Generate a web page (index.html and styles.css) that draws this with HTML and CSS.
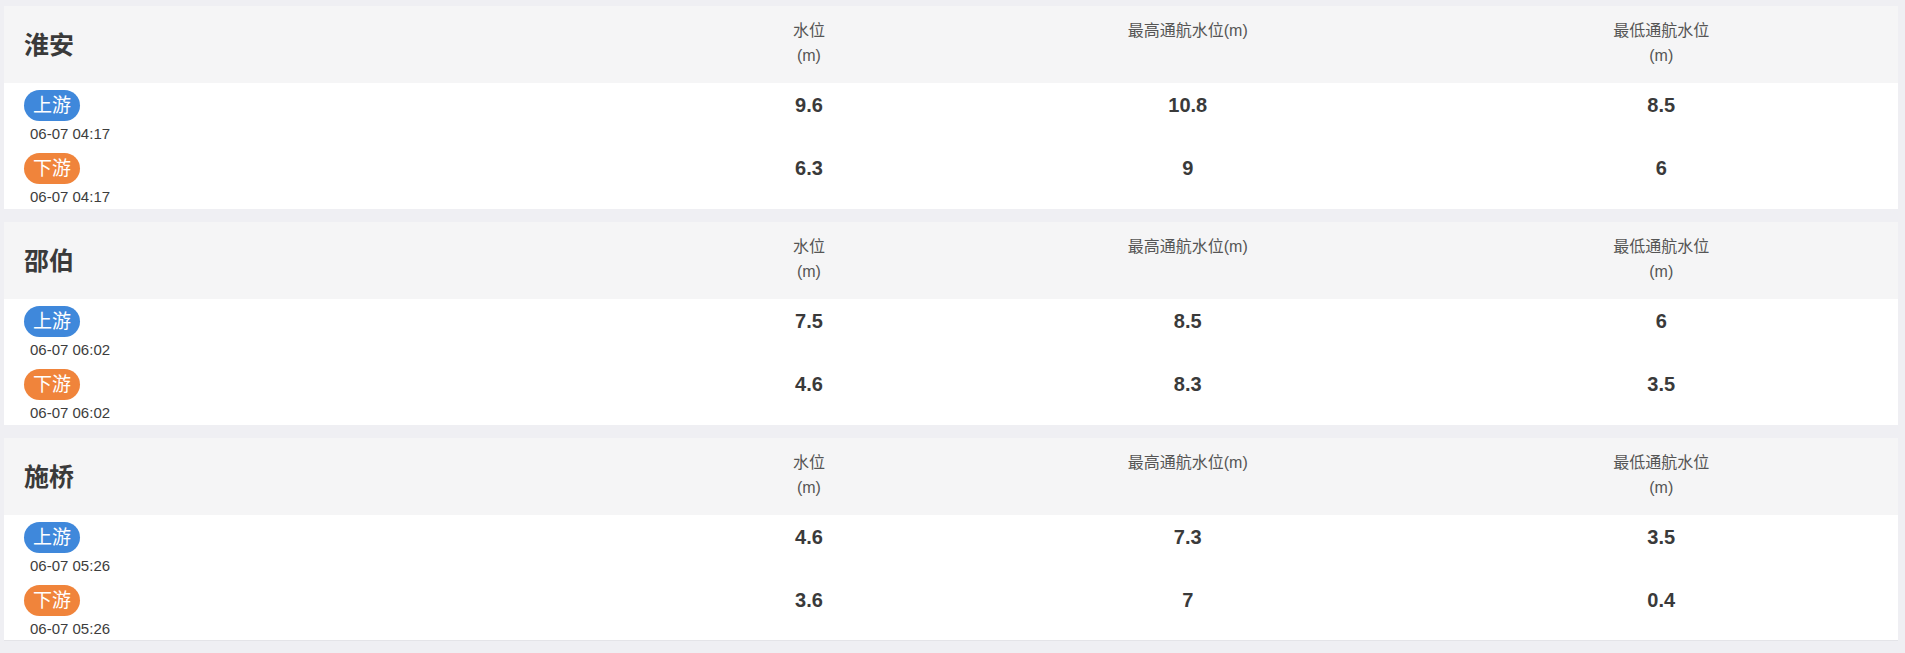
FILE: index.html
```html
<!DOCTYPE html>
<html lang="zh-CN">
<head>
<meta charset="utf-8">
<title>水位</title>
<link rel="stylesheet" href="styles.css">
</head>
<body>
<div class="page">
  <section class="card">
    <div class="card-head">
      <div class="station">淮安</div>
      <div class="col-title">水位<br>(m)</div>
      <div class="col-title">最高通航水位(m)</div>
      <div class="col-title">最低通航水位<br>(m)</div>
    </div>
    <div class="row">
      <div class="loc"><span class="badge up">上游</span><div class="time">06-07 04:17</div></div>
      <div class="val">9.6</div><div class="val">10.8</div><div class="val">8.5</div>
    </div>
    <div class="row">
      <div class="loc"><span class="badge down">下游</span><div class="time">06-07 04:17</div></div>
      <div class="val">6.3</div><div class="val">9</div><div class="val">6</div>
    </div>
  </section>
  <section class="card">
    <div class="card-head">
      <div class="station">邵伯</div>
      <div class="col-title">水位<br>(m)</div>
      <div class="col-title">最高通航水位(m)</div>
      <div class="col-title">最低通航水位<br>(m)</div>
    </div>
    <div class="row">
      <div class="loc"><span class="badge up">上游</span><div class="time">06-07 06:02</div></div>
      <div class="val">7.5</div><div class="val">8.5</div><div class="val">6</div>
    </div>
    <div class="row">
      <div class="loc"><span class="badge down">下游</span><div class="time">06-07 06:02</div></div>
      <div class="val">4.6</div><div class="val">8.3</div><div class="val">3.5</div>
    </div>
  </section>
  <section class="card last">
    <div class="card-head">
      <div class="station">施桥</div>
      <div class="col-title">水位<br>(m)</div>
      <div class="col-title">最高通航水位(m)</div>
      <div class="col-title">最低通航水位<br>(m)</div>
    </div>
    <div class="row">
      <div class="loc"><span class="badge up">上游</span><div class="time">06-07 05:26</div></div>
      <div class="val">4.6</div><div class="val">7.3</div><div class="val">3.5</div>
    </div>
    <div class="row">
      <div class="loc"><span class="badge down">下游</span><div class="time">06-07 05:26</div></div>
      <div class="val">3.6</div><div class="val">7</div><div class="val">0.4</div>
    </div>
  </section>
</div>
</body>
</html>
```
FILE: styles.css
```css
html, body {
  margin: 0;
  padding: 0;
  background: #efeff3;
}
body {
  font-family: "Liberation Sans", "Noto Sans CJK SC", sans-serif;
  color: #333;
}
.page {
  padding: 6px 7px 0 4px;
  display: flex;
  flex-direction: column;
  gap: 13px;
}
.card {
  background: #fff;
  height: 203px;
  box-sizing: border-box;
}
.card.last {
  border-bottom: 1px solid #e4e4e8;
}
.card-head,
.row {
  display: grid;
  grid-template-columns: 35% 15% 25% 25%;
}
.card-head {
  height: 77px;
  background: #f5f5f6;
}
.station {
  align-self: center;
  padding-left: 20px;
  font-size: 25px;
  font-weight: bold;
  color: #3a3a3a;
  line-height: 30px;
}
.col-title {
  padding-top: 12px;
  text-align: center;
  font-size: 16px;
  line-height: 25px;
  color: #555;
}
.row {
  height: 63px;
  box-sizing: border-box;
  padding-top: 7px;
  align-items: start;
}
.loc {
  padding-left: 20px;
}
.badge {
  display: inline-block;
  height: 31px;
  line-height: 31px;
  padding: 0 9px;
  border-radius: 16px;
  font-size: 19px;
  color: #fff;
}
.badge.up {
  background: #3f88db;
}
.badge.down {
  background: #f0843b;
}
.time {
  padding-left: 6px;
  font-size: 15px;
  line-height: 25px;
  color: #3d3d3d;
}
.val {
  text-align: center;
  font-size: 20px;
  font-weight: bold;
  line-height: 31px;
  color: #3a3a3a;
}
```
